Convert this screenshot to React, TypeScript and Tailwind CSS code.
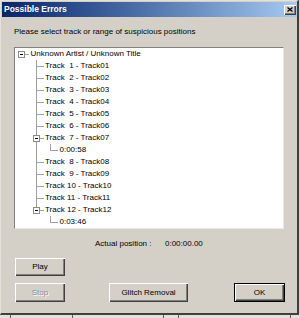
import React from "react";

type Row = {
  level: number;
  label: string;
  box?: boolean;
  last?: boolean;
  guide1?: boolean;
};

const rows: Row[] = [
  { level: 0, label: "Unknown Artist / Unknown Title", box: true, last: true },
  { level: 1, label: "Track  1 - Track01" },
  { level: 1, label: "Track  2 - Track02" },
  { level: 1, label: "Track  3 - Track03" },
  { level: 1, label: "Track  4 - Track04" },
  { level: 1, label: "Track  5 - Track05" },
  { level: 1, label: "Track  6 - Track06" },
  { level: 1, label: "Track  7 - Track07", box: true },
  { level: 2, label: "0:00:58", last: true, guide1: true },
  { level: 1, label: "Track  8 - Track08" },
  { level: 1, label: "Track  9 - Track09" },
  { level: 1, label: "Track 10 - Track10" },
  { level: 1, label: "Track 11 - Track11" },
  { level: 1, label: "Track 12 - Track12", box: true, last: true },
  { level: 2, label: "0:03:46", last: true, guide1: false },
];

function Expander() {
  return (
    <svg
      width="7"
      height="7"
      viewBox="0 0 7 7"
      className="absolute left-[3px] top-[3px]"
    >
      <rect x="0.5" y="0.5" width="6" height="6" fill="#fff" stroke="#8a8a8a" />
      <line x1="2" y1="3.5" x2="5" y2="3.5" stroke="#000" />
    </svg>
  );
}

// one connector column of the tree
function Cell({
  top,
  bottom,
  dash,
  box,
}: {
  top?: boolean;
  bottom?: boolean;
  dash?: boolean;
  box?: boolean;
}) {
  return (
    <div className="relative w-[14.5px] h-[12px] shrink-0">
      {top && <div className="absolute left-[6px] top-0 h-[6px] w-px bg-[#a0a0a0]" />}
      {bottom && <div className="absolute left-[6px] top-[6px] h-[6px] w-px bg-[#a0a0a0]" />}
      {dash && <div className="absolute left-[6px] top-[6px] h-px w-[8px] bg-[#a0a0a0]" />}
      {box && <Expander />}
    </div>
  );
}

function TreeRow({ row }: { row: Row }) {
  const cells: React.ReactNode[] = [];
  if (row.level === 0) {
    cells.push(<Cell key="c0" dash box />);
  } else if (row.level === 1) {
    cells.push(<Cell key="c0" />);
    cells.push(<Cell key="c1" top bottom={!row.last} dash box={row.box} />);
  } else {
    cells.push(<Cell key="c0" />);
    cells.push(<Cell key="c1" top={row.guide1} bottom={row.guide1} />);
    cells.push(<Cell key="c2" top bottom={!row.last} dash />);
  }
  return (
    <div className="flex items-center h-[12px]">
      {cells}
      <span className="pl-[1px] whitespace-pre leading-[12px]">{row.label}</span>
    </div>
  );
}

function Button({
  children,
  className,
  disabled,
  isDefault,
}: {
  children: React.ReactNode;
  className: string;
  disabled?: boolean;
  isDefault?: boolean;
}) {
  return (
    <button
      className={[
        "flex items-center justify-center bg-[#d4d0c8] text-[8px] leading-none",
        "shadow-[inset_1px_1px_0_#fff,inset_-1px_-1px_0_#404040,inset_-2px_-2px_0_#808080]",
        isDefault ? "border border-black" : "",
        disabled ? "text-[#8c8c8c] [text-shadow:1px_1px_0_#fff]" : "text-black",
        className,
      ].join(" ")}
    >
      {children}
    </button>
  );
}

export default function App() {
  return (
    <div className="w-[300px] h-[318px] bg-[#d4d0c8] overflow-hidden font-['Liberation_Sans',Arial,sans-serif] text-black">
      {/* dialog frame */}
      <div className="w-[299px] h-[315px] flex flex-col border-t border-l border-[#e4e1da] border-r-2 border-b-2 border-r-[#404040] border-b-[#404040] pl-px pt-px">
        {/* title bar */}
        <div className="h-[15px] w-[295px] flex items-center justify-between bg-gradient-to-r from-[#0a246a] to-[#a6caf0] pl-[2px] pr-[1px]">
          <span className="text-white font-bold text-[8.5px] leading-none">Possible Errors</span>
          <div className="w-[12px] h-[10px] flex items-center justify-center bg-[#d4d0c8] shadow-[inset_1px_1px_0_#fff,inset_-1px_-1px_0_#404040,inset_-2px_-2px_0_#808080]">
            <svg width="6" height="5" viewBox="0 0 6 5">
              <path d="M0.5 0.5 L5.5 4.5 M5.5 0.5 L0.5 4.5" stroke="#000" strokeWidth="1.3" />
            </svg>
          </div>
        </div>

        {/* body */}
        <div className="flex flex-col pl-[12px] text-[8px]">
          <div className="mt-[10px] h-[10px] leading-[10px]">
            Please select track or range of suspicious positions
          </div>

          <div className="mt-[10px] w-[270px] h-[182px] bg-white border border-t-[#808080] border-l-[#808080] border-r-[#e8e8e8] border-b-[#e8e8e8] overflow-hidden">
            {rows.map((r, i) => (
              <TreeRow key={i} row={r} />
            ))}
          </div>

          <div className="mt-[10px] flex items-center h-[10px] leading-[10px]">
            <span className="ml-[81px] w-[60px]">Actual position :</span>
            <span className="ml-[10px]">0:00:00.00</span>
          </div>

          <div className="mt-[9px] flex">
            <Button className="ml-px w-[50px] h-[18px]">Play</Button>
          </div>

          <div className="mt-[7px] flex">
            <Button className="ml-px w-[50px] h-[19px]" disabled>
              Stop
            </Button>
            <Button className="ml-[44px] w-[79px] h-[19px]">Glitch Removal</Button>
            <Button className="ml-[46px] w-[51px] h-[19px]" isDefault>
              OK
            </Button>
          </div>
        </div>
      </div>
      {/* what lies below the dialog */}
      <div className="flex h-[3px] bg-[#e4e1da]">
        <div className="ml-[10px] w-px bg-[#606060]" />
        <div className="ml-[61px] w-px bg-[#606060]" />
        <div className="ml-[90px] w-px bg-[#606060]" />
        <div className="ml-[14px] w-px bg-[#606060]" />
        <div className="ml-[111px] w-px bg-[#606060]" />
      </div>
    </div>
  );
}
